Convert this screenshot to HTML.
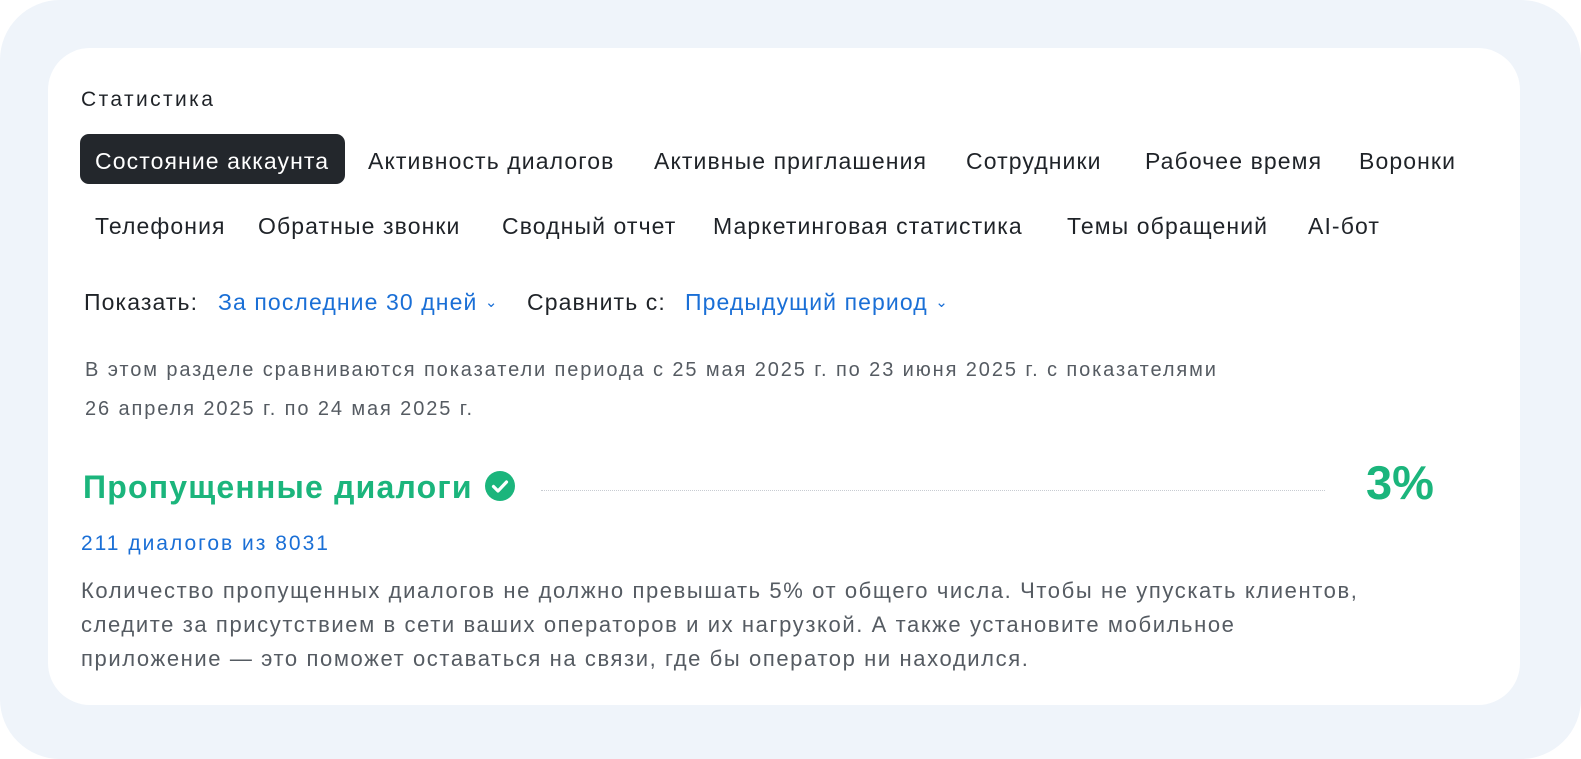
<!DOCTYPE html><html><head><meta charset="utf-8"><style>
body{margin:0;width:1581px;height:759px;background:#fff;font-family:"Liberation Sans",sans-serif;overflow:hidden}
.outer{position:absolute;left:0;top:0;width:1581px;height:759px;background:#eff4fa;border-radius:60px}
.card{position:absolute;left:48px;top:48px;width:1472px;height:657px;background:#fff;border-radius:42px}
.a{position:absolute;white-space:nowrap}
.tab{position:absolute;font-size:23px;letter-spacing:1.1px;color:#1f2328;white-space:nowrap}
.blue{color:#1a6fd6}
</style></head><body><div class="outer"></div><div class="card"></div>
<div class="a" style="left:81px;top:88px;font-size:21px;letter-spacing:2.4px;color:#1f2328">Статистика</div>
<div class="a" style="left:80px;top:134px;width:265px;height:50px;background:#23272c;border-radius:9px"></div>
<div class="tab" style="left:95px;top:148px;color:#fff">Состояние аккаунта</div>
<div class="tab" style="left:368px;top:148px">Активность диалогов</div>
<div class="tab" style="left:654px;top:148px">Активные приглашения</div>
<div class="tab" style="left:966px;top:148px">Сотрудники</div>
<div class="tab" style="left:1145px;top:148px">Рабочее время</div>
<div class="tab" style="left:1359px;top:148px">Воронки</div>
<div class="tab" style="left:95px;top:213px">Телефония</div>
<div class="tab" style="left:258px;top:213px">Обратные звонки</div>
<div class="tab" style="left:502px;top:213px">Сводный отчет</div>
<div class="tab" style="left:713px;top:213px">Маркетинговая статистика</div>
<div class="tab" style="left:1067px;top:213px">Темы обращений</div>
<div class="tab" style="left:1308px;top:213px">AI-бот</div>
<div class="tab" style="left:84px;top:289px">Показать:</div>
<div class="tab blue" style="left:218px;top:289px">За последние 30 дней <span style="font-size:15px;position:relative;top:-3px">&#8964;</span></div>
<div class="tab" style="left:527px;top:289px">Сравнить с:</div>
<div class="tab blue" style="left:685px;top:289px">Предыдущий период <span style="font-size:15px;position:relative;top:-3px">&#8964;</span></div>
<div class="a" style="left:85px;top:351px;font-size:20px;letter-spacing:1.9px;color:#555b62;line-height:39px">В этом разделе сравниваются показатели периода с 25 мая 2025 г. по 23 июня 2025 г. с показателями<br>26 апреля 2025 г. по 24 мая 2025 г.</div>
<div class="a" style="left:83px;top:469px;font-size:32px;letter-spacing:1.2px;font-weight:bold;color:#1bb57c">Пропущенные диалоги</div>
<svg class="a" style="left:484px;top:470px" width="32" height="32" viewBox="0 0 32 32"><circle cx="16" cy="16" r="15" fill="#1bb57c"/><path d="M9.5 16.5l4.5 4.5 8.5-9" stroke="#fff" stroke-width="3.2" fill="none" stroke-linecap="round" stroke-linejoin="round"/></svg>
<div class="a" style="left:541px;top:490px;width:784px;border-top:1.5px dotted #c8ccd2"></div>
<div class="a" style="left:1366px;top:455px;font-size:47px;font-weight:bold;color:#1bb57c">3%</div>
<div class="a blue" style="left:81px;top:532px;font-size:21px;letter-spacing:2px">211 диалогов из 8031</div>
<div class="a" style="left:81px;top:574px;font-size:22px;letter-spacing:1.6px;color:#555b62;line-height:34px">Количество пропущенных диалогов не должно превышать 5% от общего числа. Чтобы не упускать клиентов,<br>следите за присутствием в сети ваших операторов и их нагрузкой. А также установите мобильное<br>приложение — это поможет оставаться на связи, где бы оператор ни находился.</div>
</body></html>
